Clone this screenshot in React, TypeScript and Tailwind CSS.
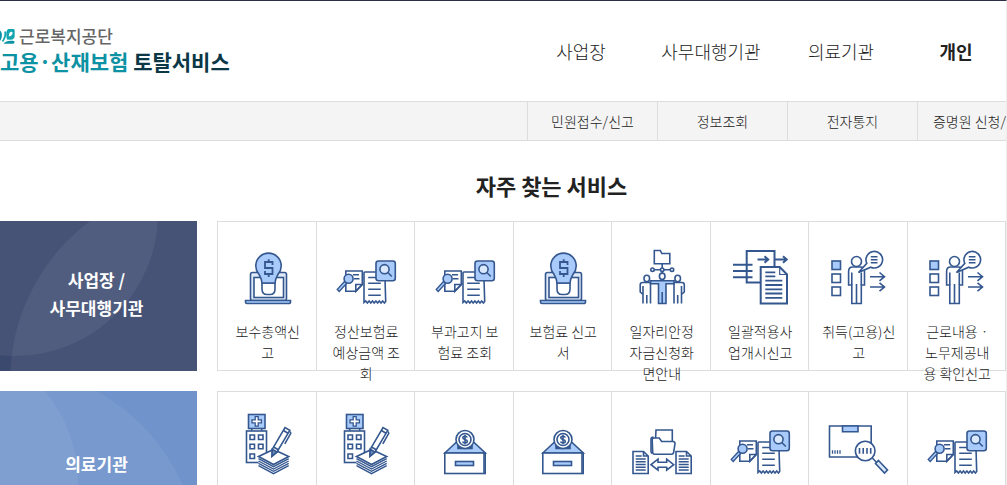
import React from 'react'

const LINE = '#34578f'
const FILL = '#a9cbfb'

const IconBox = ({ children }: { children: React.ReactNode }) => (
  <svg
    className="w-16 h-16 shrink-0"
    viewBox="0 0 64 64"
    fill="none"
    stroke={LINE}
    strokeWidth="1.6"
    aria-hidden="true"
  >
    {children}
  </svg>
)

const BulbLaptopIcon = () => (
  <IconBox>
    <rect x="14.5" y="31.5" width="36" height="28" rx="2" fill="#dfe9f8" />
    <rect x="18" y="36.5" width="29.5" height="20" fill="#fff" />
    <path d="M9.5 59.5h45v1.5a1.5 1.5 0 0 1-1.5 1.5h-42a1.5 1.5 0 0 1-1.5-1.5z" fill={FILL} />
    <path d="M26 42h13v6c0 3.5-2 5.500-5 5.500h-3c-3 0-5-2-5-5.500z" fill="#fff" />
    <path
      d="M26 42c0-4-1.500-6-3.200-9a12.700 12.700 0 1 1 19.400 0c-1.700 3-3.200 5-3.200 9z"
      fill={FILL}
    />
    <path d="M36.500 24v-3h-7.500v6h7.500v6h-7.500v-3M32.700 18.300V21M32.700 33v3" strokeWidth="1.800" />
  </IconBox>
)

const DocSearchIcon = () => (
  <IconBox>
    <path d="M11.800 30h16.500v13.500l-6.500 6.800h-10z" fill="#fff" />
    <path d="M28.300 43.500h-6.500v6.800z" />
    <path d="M19 33.700h6M20 37.700h5.500" />
    <path d="M10.500 40.500l2 2-7.300 8-2-2z" fill={FILL} strokeWidth="1.300" />
    <circle cx="14.600" cy="37.700" r="4.500" fill={FILL} />
    <path
      d="M50.800 31H31a1 1 0 0 0-1 1v29.500l1.700-1.500 1.700 2 1.700-2 1.700 2 1.700-2 1.700 2 1.700-2 1.700 2 1.700-2 1.700 2 1.700-2 1.700 2 1.300-1.500z"
      fill="#fff"
    />
    <path d="M34.200 36.500h8M34.200 42.300h12.600M34.200 48.300h12.600M34.200 54.300h12.600" />
    <rect x="42" y="20" width="19.300" height="19.700" rx="2.500" fill={FILL} />
    <circle cx="50.500" cy="28.200" r="4.600" fill="#d9e8fd" />
    <path d="M53.800 31.500l4 4" />
  </IconBox>
)

const PeopleIcon = () => (
  <IconBox>
    <path d="M24.300 9.500h6l1.500 3h8v10.200H24.300z" />
    <path d="M32.200 22.700v4.300M24.200 28.700h6.300M34 28.700h6.300M32.200 30.400v1.500" />
    <circle cx="22.500" cy="28.700" r="1.700" />
    <circle cx="32.200" cy="28.700" r="1.700" />
    <circle cx="42" cy="28.700" r="1.700" />
    <path d="M20.500 39.800h23.500v3h-8V62.500h-7.500V42.800h-8z" fill={FILL} />
    <path d="M32.200 51v11.500" />
    <ellipse cx="32.200" cy="35.300" rx="2.800" ry="3.200" fill="#fff" />
    <ellipse cx="16.800" cy="37.500" rx="2.800" ry="3.200" fill="#fff" />
    <ellipse cx="47.700" cy="37.500" rx="2.800" ry="3.200" fill="#fff" />
    <path d="M20.500 41.500h-8c-1.500 0-2.300 1-2.300 2.500v7l2.800 2.500v9M13 45v8.500M20.500 41.500V62.500M16.800 54v8.500" />
    <path d="M44 41.500h8c1.500 0 2.300 1 2.300 2.500v7l-2.800 2.500v9M51.500 45v8.500M44 41.500V62.500M47.700 54v8.500" />
  </IconBox>
)

const FileTransferIcon = () => (
  <IconBox>
    <g strokeWidth="2">
      <path d="M18.700 10h27.800v31.500H18.700z" />
      <path d="M5 23.700h19.500M5 30h19.500M5 36.300h19.500" />
      <path d="M29.500 18.500h10M36.500 15.300l3.700 3.200-3.700 3.200M47 18.500h11.500M55 15.300l3.700 3.200-3.700 3.200" />
      <path d="M32.700 26h19l7.300 7.500v29H32.700z" fill="#fff" />
      <path d="M51.700 26v7.500H59" strokeWidth="1.200" />
      <path
        d="M37.300 31.300h10M37.300 35.300h10M37.300 39.700h17M37.300 44h17M37.300 48.300h17M37.300 52.500h17M37.300 56.800h17"
        strokeWidth="1.800"
      />
    </g>
  </IconBox>
)

const PersonTalkIcon = () => (
  <IconBox>
    <rect x="5" y="20" width="8.500" height="8.500" fill={FILL} />
    <rect x="5" y="33" width="8.500" height="8.500" />
    <rect x="5" y="46" width="8.500" height="8.500" />
    <circle cx="29.500" cy="20.500" r="5" />
    <path d="M25.500 26h8c2.500 0 4 2 4 4.500v13.500h-3.200V62.500h-9.500V44h-3.200V30.500c0-2.500 1.400-4.500 3.900-4.500z" />
    <path d="M24.800 31.500V44M34.300 31.500V44M29.500 43v19.500" />
    <path d="M39.800 22.300A8.300 8.300 0 1 1 43.700 26.200L31.500 31.500z" fill="#fff" />
    <path d="M43.800 15.700h6.700M43.800 18.700h6.700M43.800 21.700h6.700" />
    <path d="M43 35.700h14M52.500 31.500l5 4.200-5 4.200M43 46h14M52.500 41.800l5 4.200-5 4.200" />
  </IconBox>
)

const HospitalIcon = () => (
  <IconBox>
    <rect x="12.500" y="3.500" width="16.500" height="14" fill={FILL} />
    <path
      d="M19.200 5.700h3v3.200h3.200v3h-3.200v3.200h-3v-3.200H16v-3h3.200z"
      fill="#fff"
      strokeWidth="1.300"
    />
    <path d="M15.700 17.500v2.200M25.700 17.500v2.200" />
    <rect x="10.500" y="20" width="20" height="31.500" fill="#fff" />
    <path d="M14 24h4.500v4.500H14zM22.500 24H27v4.500h-4.500zM14 33.300h4.500v4.500H14zM22.500 33.300H27v4.500h-4.500zM14 43h4.500v4.500H14z" />
    <path d="M22.500 45.500v9L37.500 62.500l15.200-8v-9z" fill="#fff" stroke="none" />
    <path d="M22.500 45.500L37.500 38.500l15.200 7L37.500 53.500z" fill="#fff" />
    <path
      d="M22.500 47.700l15 8 15.200-8M22.500 50l15 8 15.200-8M22.500 52.300l15 8 15.200-8M22.500 54.600l15 8 15.200-8"
      strokeWidth="1.400"
    />
    <path d="M36 45.200l.3-7L49 16.500l4.800 2.800L41 41z" fill="#fff" />
    <path d="M36.300 38.200l4.700 2.800-5 4.200z" fill="#6e8fbd" />
    <path d="M37.500 36l4.800 2.800M47.500 19.500l4.500 2.800M54 20.500l.8 1.800-6 10.500" />
  </IconBox>
)

const CoinBoxIcon = () => (
  <IconBox>
    <path d="M11.800 42l12-11.300h16.500l12 11.300z" fill={FILL} />
    <path d="M25 34.500h14v3H25z" fill={LINE} />
    <circle cx="32" cy="28.500" r="9" fill="#fff" />
    <circle cx="32" cy="28.500" r="6" />
    <path d="M34.300 26.500c-.4-1-1.200-1.300-2.300-1.300-1.400 0-2.200.6-2.200 1.600 0 2.300 4.500 1 4.500 3.400 0 1-.9 1.700-2.300 1.700-1.200 0-2.100-.5-2.400-1.500M32 23.700v9.600" />
    <rect x="11.800" y="42" width="40.400" height="20.500" fill="#fff" />
    <path d="M51 42v20.500" />
    <rect x="22.500" y="50.500" width="18" height="4" fill={FILL} />
  </IconBox>
)

const FolderSyncIcon = () => (
  <IconBox>
    <path d="M25.500 29l.5-10h16.300v13" />
    <path d="M22.500 42.500c-1-.3-1.500-1-1.500-2V28.500c0-1.500 1-2.500 2.500-2.500" />
    <path
      d="M22.200 29c0-1.300.8-2 2-2h5l2.500 3.500h11.500c1.300 0 2 1 1.800 2.200l-1.300 8.500c-.2 1.300-1 2-2.200 2H24.500c-1.300 0-1.700-.8-1.800-2z"
      fill="#fff"
    />
    <path d="M3 40.500h10.500l4.700 4.500v17.500H3zM13.500 40.500V45h4.700" />
    <path d="M46 40.500h10.500l4.700 4.500v17.500H46zM56.500 40.500V45h4.700" />
    <path d="M5.700 45h6M5.700 48h10M5.700 50.800h10M5.700 53.500h10M5.700 56.200h10M5.700 59h10" />
    <path d="M48.700 45h6M48.700 48h10M48.700 50.800h10M48.700 53.500h10M48.700 56.200h10M48.700 59h10" />
    <path d="M21 53.700l7-5.500v3h8.700v-3l7 5.500-7 5.500v-3H28v3z" />
  </IconBox>
)

const BoxSearchIcon = () => (
  <IconBox>
    <path d="M2.500 15h41.700v31H2.500z" />
    <path d="M15.500 15h15.500v5.700H15.500z" fill={FILL} />
    <path d="M5.500 39.300v3.500M8 39.300v3.500M10.500 39.300v3.500M13 39.300v3.500" strokeWidth="1.300" />
    <path d="M45 46.700l4.500 4.500" />
    <path d="M51.500 49.500l9 9.500-3 3-9-9.500z" fill="#d9e8fd" />
    <circle cx="38.200" cy="40" r="9.800" fill="#fff" />
    <path d="M32.500 37v5.700M36.200 37v5.700M40 37v5.700M43.700 37v5.700" />
  </IconBox>
)

const mainMenu = [
  { label: '사업장', className: 'w-[130px]' },
  { label: '사무대행기관', className: 'w-[130px]' },
  { label: '의료기관', className: 'w-[130px]' },
  { label: '개인', className: 'w-[100px] font-bold' },
]

const subMenu = [
  { label: '민원접수/신고', className: 'w-[130px] justify-center' },
  { label: '정보조회', className: 'w-[130px] justify-center' },
  { label: '전자통지', className: 'w-[130px] justify-center' },
  { label: '증명원 신청/', className: 'flex-1 justify-end' },
]

const businessServices = [
  { label: '보수총액신고', Icon: BulbLaptopIcon },
  { label: '정산보험료 예상금액 조회', Icon: DocSearchIcon },
  { label: '부과고지 보험료 조회', Icon: DocSearchIcon },
  { label: '보험료 신고서', Icon: BulbLaptopIcon },
  { label: '일자리안정자금신청화면안내', Icon: PeopleIcon },
  { label: '일괄적용사업개시신고', Icon: FileTransferIcon },
  { label: '취득(고용)신고', Icon: PersonTalkIcon },
  { label: '근로내용 ·\n노무제공내용 확인신고', Icon: PersonTalkIcon },
]

const medicalServices = [
  { label: '', Icon: HospitalIcon },
  { label: '', Icon: HospitalIcon },
  { label: '', Icon: CoinBoxIcon },
  { label: '', Icon: CoinBoxIcon },
  { label: '', Icon: FolderSyncIcon },
  { label: '', Icon: DocSearchIcon },
  { label: '', Icon: BoxSearchIcon },
  { label: '', Icon: DocSearchIcon },
]

const ServiceRow = ({
  title,
  bg,
  circles,
  services,
}: {
  title: string
  bg: string
  circles: { cx: number; cy: number; r: number }[]
  services: typeof businessServices
}) => (
  <section className="flex gap-5">
    <div className={`relative w-[197px] h-[150px] shrink-0 overflow-hidden ${bg}`}>
      <svg className="absolute inset-0 w-full h-full" viewBox="0 0 197 150" aria-hidden="true">
        {circles.map((circle, i) => (
          <circle key={i} {...circle} fill="#fff" fillOpacity="0.06" />
        ))}
      </svg>
      <h3 className="relative h-full pb-1 pr-1 flex items-center justify-center text-center whitespace-pre-line text-[17px] leading-7 font-bold text-white">
        {title}
      </h3>
    </div>

    <ul className="flex-1 grid grid-cols-8 h-[150px] border border-r-0 border-[#ddd]">
      {services.map(({ label, Icon }, i) => (
        <li key={i} className="h-[148px] border-r border-[#ddd]">
          <a href="#" className="flex flex-col items-center pl-3 pr-[10px] pt-[19px]">
            <Icon />
            <span className="mt-4 text-sm leading-[21px] text-center whitespace-pre-line">
              {label}
            </span>
          </a>
        </li>
      ))}
    </ul>
  </section>
)

const App = () => {
  return (
    <div className="h-screen overflow-hidden bg-white border-t border-t-[#2b2d45] border-r border-r-[#eee] text-[#222] font-['Noto_Sans_CJK_KR','Noto_Sans',sans-serif] font-light">
      <header className="flex justify-between h-[100px]">
        <a href="#" className="pt-6 font-bold">
          <span className="flex items-center gap-1 text-[17px] leading-[22px] font-medium text-[#666]">
            <svg className="w-[15px] h-[15px] shrink-0" viewBox="0 0 15 15" aria-hidden="true">
              <path d="M0 1.500c2.300 1.500 2.800 6.500 0 10.500z" fill="#0a93a6" />
              <path
                d="M8 0h5c1.200 0 1.700.7 1.700 1.700V7c0 2.500-2 4-4.500 3.800L7 10.500C5.800 6 6 2 8 0z"
                fill="#13a5b0"
              />
              <path d="M8.800 7.500c0-2.800 1-4.700 2.600-4.700 1.300 0 1.600 1.500.8 2.800-.8 1.200-2 1.900-3.400 1.900z" fill="#fff" />
              <path d="M5.200 2.500c.5 3-.2 6.500-2.700 10" stroke="#13a5b0" strokeWidth="1.800" fill="none" />
              <path d="M3.500 14.800c2-2.500 5.500-3.500 11-2.600v.8c0 1.200-.7 1.800-1.700 1.800z" fill="#0a93a6" />
            </svg>
            근로복지공단
          </span>
          <span className="block text-[21px] leading-7 text-[#0d92a3]">
            고용·산재보험 <span className="text-[#0b3747]">토탈서비스</span>
          </span>
        </a>

        <nav aria-label="주메뉴">
          <ul className="flex h-full items-center text-lg text-center">
            {mainMenu.map((item) => (
              <li key={item.label} className={item.className}>
                <a href="#">{item.label}</a>
              </li>
            ))}
          </ul>
        </nav>
      </header>

      <nav
        aria-label="하위메뉴"
        className="flex h-10 pl-[527px] border-y border-[#ddd] bg-[#f4f4f4]"
      >
        {subMenu.map((item) => (
          <a
            key={item.label}
            href="#"
            className={`flex items-center whitespace-nowrap border-l border-[#ddd] text-sm ${item.className}`}
          >
            {item.label}
          </a>
        ))}
      </nav>

      <main>
        <h2 className="pt-7 pb-5 ml-[97px] text-center text-[22px] leading-8 font-bold">
          자주 찾는 서비스
        </h2>

        <div className="flex flex-col gap-5">
          <ServiceRow
            title={'사업장 /\n사무대행기관'}
            bg="bg-[#3c496e]"
            circles={[
              { cx: 15, cy: -8, r: 143 },
              { cx: 210, cy: 160, r: 200 },
            ]}
            services={businessServices}
          />
          <ServiceRow
            title="의료기관"
            bg="bg-[#7093cb]"
            circles={[
              { cx: -60, cy: 90, r: 138 },
              { cx: 0, cy: 175, r: 200 },
            ]}
            services={medicalServices}
          />
        </div>
      </main>
    </div>
  )
}

export default App
